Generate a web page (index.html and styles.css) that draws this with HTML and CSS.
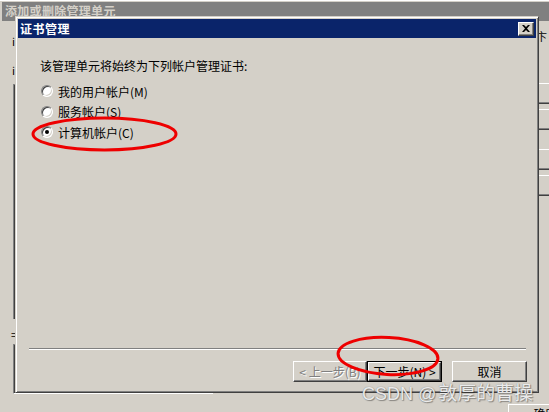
FILE: index.html
```html
<!DOCTYPE html>
<html lang="zh-CN">
<head>
<meta charset="utf-8">
<title>证书管理</title>
<link rel="stylesheet" href="styles.css">
</head>
<body>
<div class="desktop">
  <div class="bgwin">
    <div class="bg-title">添加或删除管理单元</div>
    <div class="bg-frag frag1">i</div>
    <div class="bg-frag frag2">i</div>
    <div class="bg-frag frag3">=</div>
    <div class="bg-frag frag4">卞</div>
    <div class="bg-list list1"></div>
    <div class="bg-list list2"></div>
    <div class="bg-btn b1"></div>
    <div class="bg-btn b2"></div>
    <div class="bg-btn b3"></div>
    <div class="bg-btn b4"></div>
    <div class="bg-btn ok">确定</div>
  </div>

  <div class="dialog">
    <div class="titlebar">
      <span class="title">证书管理</span>
      <span class="close"><svg width="8" height="7" viewBox="0 0 8 7"><path d="M0 0h2l2 2 2-2h2L5 3.5 8 7H6L4 5 2 7H0l3-3.5z" fill="#000"/></svg></span>
    </div>
    <div class="body">
      <div class="intro">该管理单元将始终为下列帐户管理证书:</div>
      <div class="options">
        <label class="opt"><span class="radio"></span><span>我的用户帐户(M)</span></label>
        <label class="opt"><span class="radio"></span><span>服务帐户(S)</span></label>
        <label class="opt"><span class="radio checked"></span><span>计算机帐户(C)</span></label>
      </div>
      <div class="footer">
        <div class="sep"></div>
        <div class="buttons">
          <span class="btn disabled">&lt; 上一步(B)</span>
          <span class="btn default"><span class="btn-in">下一步(N) &gt;</span></span>
          <span class="btn cancel">取消</span>
        </div>
      </div>
    </div>
  </div>

  <div class="watermark">CSDN @<span class="wm-cjk">敦厚的曹操</span></div>

  <svg class="marks" width="549" height="412" viewBox="0 0 549 412">
    <ellipse cx="104.5" cy="133" rx="71.5" ry="16" fill="none" stroke="#ee0000" stroke-width="3"/>
    <ellipse cx="388" cy="355" rx="50" ry="18.5" fill="none" stroke="#ee0000" stroke-width="3" transform="rotate(3 388 355)"/>
  </svg>
</div>
</body>
</html>
```

FILE: styles.css
```css
* { box-sizing: border-box; }
html, body {
  margin: 0;
  padding: 0;
  background: #d4d0c8;
}
body {
  font-family: "Noto Sans CJK SC", "Liberation Sans", sans-serif;
  font-size: 12px;
  color: #000;
}
.desktop {
  position: relative;
  width: 549px;
  height: 412px;
  overflow: hidden;
  background: #d4d0c8;
  border-top: 1px solid #fff;
}

/* background window (partially hidden) */
.bgwin { position: absolute; inset: 0; }
.bg-title {
  position: absolute;
  left: 2px; top: 1px; right: 0;
  height: 19px;
  background: #808080;
  color: #d4d0c8;
  font-weight: bold;
  font-size: 12px;
  line-height: 18px;
  padding-left: 3px;
  letter-spacing: 0.3px;
}
.bg-frag {
  position: absolute;
  font-size: 11px;
  line-height: 12px;
  color: #000;
}
.frag1 { left: 12px; top: 34px; }
.frag2 { left: 12px; top: 63px; }
.frag3 { left: 11px; top: 327px; }
.frag4 { left: 536px; top: 29px; }
.bg-list {
  position: absolute;
  left: 13px;
  width: 200px;
  border-left: 1px solid #808080;
  border-top: 1px solid #808080;
  box-shadow: inset 1px 1px #404040;
}
.list1 { top: 83px; height: 235px; }
.list2 { top: 343px; height: 50px; border-bottom: 1px solid #fff; }
.bg-btn {
  position: absolute;
  left: 520px;
  width: 80px;
  height: 21px;
  border: 1px solid;
  border-color: #fff #404040 #404040 #fff;
  box-shadow: inset -1px -1px #808080;
}
.b1 { top: 82px; }
.b2 { top: 108px; }
.b3 { top: 148px; }
.b4 { top: 174px; }
.bg-btn.ok {
  left: 508px;
  top: 403px;
  width: 75px;
  height: 23px;
  text-align: center;
  line-height: 18px;
}

/* dialog */
.dialog {
  position: absolute;
  left: 15px;
  top: 15px;
  width: 524px;
  height: 377px;
  background: #d4d0c8;
  border: 1px solid;
  border-color: #d4d0c8 #404040 #404040 #d4d0c8;
  box-shadow: inset 1px 1px #fff, inset -1px -1px #808080;
  padding: 2px;
  display: flex;
  flex-direction: column;
}
.titlebar {
  height: 19px;
  background: #0a246a;
  display: flex;
  align-items: center;
  justify-content: space-between;
  padding: 0 2px 0 2px;
}
.title {
  color: #fff;
  font-weight: bold;
  font-size: 12px;
  line-height: 14px;
  letter-spacing: 0.5px;
}
.close {
  width: 16px;
  height: 14px;
  background: #d4d0c8;
  border: 1px solid;
  border-color: #fff #404040 #404040 #fff;
  box-shadow: inset -1px -1px #808080;
  display: flex;
  align-items: center;
  justify-content: center;
  padding-bottom: 1px;
}
.close svg { display: block; }
.body {
  flex: 1;
  display: flex;
  flex-direction: column;
  padding: 21px 9px 8px 22px;
}
.intro {
  line-height: 14px;
}
.options {
  margin-top: 8px;
  display: flex;
  flex-direction: column;
}
.opt {
  display: flex;
  align-items: center;
  gap: 5px;
  height: 20.5px;
  padding-left: 1px;
}
.radio {
  position: relative;
  width: 12px;
  height: 12px;
  border-radius: 50%;
  background: #fff;
  border: 1px solid;
  border-color: #808080 #fff #fff #808080;
  box-shadow: inset 1px 1px #404040, inset -1px -1px #d4d0c8;
  flex: none;
}
.radio.checked::after {
  content: "";
  position: absolute;
  left: 3px;
  top: 3px;
  width: 4px;
  height: 4px;
  border-radius: 50%;
  background: #000;
}
.footer {
  margin-top: auto;
}
.sep {
  height: 2px;
  border-top: 1px solid #808080;
  border-bottom: 1px solid #fff;
  margin: 0 1px 0 -11px;
}
.buttons {
  margin-top: 11px;
  display: flex;
  justify-content: flex-end;
}
.btn {
  width: 75px;
  height: 21px;
  display: flex;
  align-items: center;
  justify-content: center;
  border: 1px solid;
  border-color: #fff #404040 #404040 #fff;
  box-shadow: inset -1px -1px #808080;
  background: #d4d0c8;
  line-height: 14px;
  white-space: nowrap;
}
.btn.disabled {
  width: 74px;
  color: #808080;
  text-shadow: 1px 1px 0 #fff;
}
.btn.default {
  border: 1px solid #000;
  box-shadow: none;
  padding: 0;
}
.btn-in {
  width: 100%;
  height: 100%;
  display: flex;
  align-items: center;
  justify-content: center;
  border: 1px solid;
  border-color: #fff #404040 #404040 #fff;
  box-shadow: inset -1px -1px #808080;
}
.btn.cancel { margin-left: 10px; }

.watermark {
  position: absolute;
  left: 362px;
  top: 380px;
  font-family: "Liberation Sans", "Noto Sans CJK SC", sans-serif;
  font-size: 18px;
  line-height: 22px;
  color: rgba(255, 255, 255, 0.85);
  text-shadow: 0 0 1px #777, 1px 1px 1px rgba(0,0,0,0.35);
  white-space: nowrap;
}
.wm-cjk {
  font-family: "Noto Sans CJK SC", sans-serif;
  font-size: 19px;
  margin-left: 2px;
}
.marks {
  position: absolute;
  left: 0;
  top: 0;
  pointer-events: none;
}
```
